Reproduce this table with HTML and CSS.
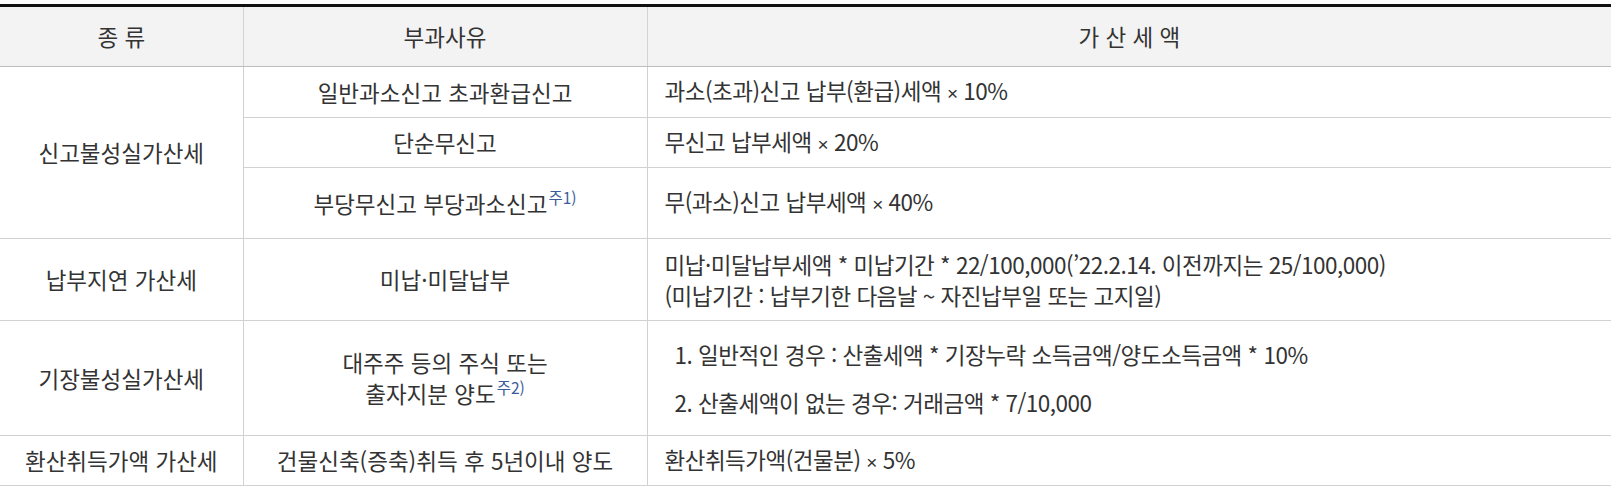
FILE: index.html
```html
<!DOCTYPE html>
<html lang="ko">
<head>
<meta charset="utf-8">
<title>가산세</title>
<link rel="stylesheet" href="styles.css">
</head>
<body>
<table class="tax">
  <colgroup>
    <col class="c1">
    <col class="c2">
    <col class="c3">
  </colgroup>
  <thead>
    <tr class="h-head">
      <th>종 류</th>
      <th>부과사유</th>
      <th>가 산 세 액</th>
    </tr>
  </thead>
  <tbody>
    <tr class="h-51">
      <td class="kind" rowspan="3">신고불성실가산세</td>
      <td class="reason">일반과소신고 초과환급신고</td>
      <td class="amount">과소(초과)신고 납부(환급)세액 <span class="times">×</span> 10%</td>
    </tr>
    <tr class="h-50">
      <td class="reason">단순무신고</td>
      <td class="amount">무신고 납부세액 <span class="times">×</span> 20%</td>
    </tr>
    <tr class="h-71">
      <td class="reason">부당무신고 부당과소신고<sup class="note">주1)</sup></td>
      <td class="amount">무(과소)신고 납부세액 <span class="times">×</span> 40%</td>
    </tr>
    <tr class="h-82">
      <td class="kind">납부지연 가산세</td>
      <td class="reason">미납·미달납부</td>
      <td class="amount">미납·미달납부세액 * 미납기간 * 22/100,000(’22.2.14. 이전까지는 25/100,000)<br>(미납기간 : 납부기한 다음날 ~ 자진납부일 또는 고지일)</td>
    </tr>
    <tr class="h-115">
      <td class="kind">기장불성실가산세</td>
      <td class="reason">대주주 등의 주식 또는<br>출자지분 양도<sup class="note">주2)</sup></td>
      <td class="amount">
        <ol class="steps">
          <li>일반적인 경우 : 산출세액 * 기장누락 소득금액/양도소득금액 * 10%</li>
          <li>산출세액이 없는 경우: 거래금액 * 7/10,000</li>
        </ol>
      </td>
    </tr>
    <tr class="h-50">
      <td class="kind">환산취득가액 가산세</td>
      <td class="reason">건물신축(증축)취득 후 5년이내 양도</td>
      <td class="amount">환산취득가액(건물분) <span class="times">×</span> 5%</td>
    </tr>
  </tbody>
</table>
</body>
</html>
```
FILE: styles.css
```css
html, body {
  margin: 0;
  padding: 0;
  background: #ffffff;
}

body {
  padding-top: 4px;
  font-family: "Noto Sans CJK KR", "Noto Sans", sans-serif;
  font-size: 22.5px;
  color: #333333;
}

.tax {
  width: 1611px;
  border-collapse: collapse;
  table-layout: fixed;
  border-top: 3px solid #111111;
}

.c1 { width: 243px; }
.c2 { width: 404px; }
.c3 { width: 964px; }

.tax th,
.tax td {
  padding: 0;
  border-bottom: 1px solid #d2d2d2;
  border-left: 1px solid #d2d2d2;
  vertical-align: middle;
  line-height: 31px;
}

.tax th:first-child,
.tax td.kind {
  border-left: none;
}

.tax th {
  background: #f3f3f3;
  font-weight: normal;
  text-align: center;
  border-bottom: 1px solid #bdbdbd;
}

.h-head { height: 61px; }
.h-51 { height: 51px; }
.h-50 { height: 50px; }
.h-71 { height: 71px; }
.h-82 { height: 82px; }
.h-115 { height: 115px; }

.kind,
.reason {
  text-align: center;
}

.tax td.amount {
  text-align: left;
  padding-left: 17px;
  letter-spacing: -0.5px;
}

.times {
  font-family: "Liberation Sans", sans-serif;
  font-size: 19px;
}

.note {
  font-size: 15.5px;
  line-height: 0;
  color: #3b5b9a;
  vertical-align: 9px;
  margin-left: 1px;
}

.steps {
  margin: 0;
  padding: 0 0 0 10px;
  list-style: decimal inside;
}

.steps li + li {
  margin-top: 17px;
}
```
